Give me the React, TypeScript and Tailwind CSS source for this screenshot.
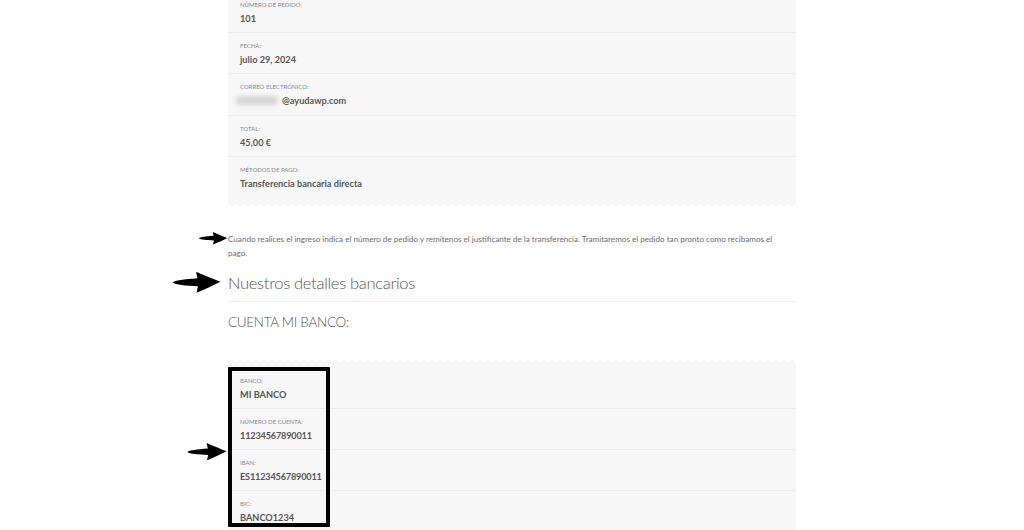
import React from "react";

function Arrow({ className }: { className?: string }) {
  return (
    <svg viewBox="0 0 50 24" className={className} fill="#000">
      <path d="M0.5 12.5 C3 10.5 12 9.5 26 8.3 L24.5 1.5 C33 5 42 9 49.5 11.8 C42 15.5 33 20 25 23 L26.5 16.3 C13 15.6 4 15 0.5 12.5 Z" />
    </svg>
  );
}

function Zigzag({ flip }: { flip?: boolean }) {
  return (
    <svg className="block w-full h-[5px]" preserveAspectRatio="none">
      <defs>
        <pattern id={flip ? "zz-top" : "zz-bot"} width="8" height="5" patternUnits="userSpaceOnUse">
          {flip ? (
            <path d="M0 5 Q2 5 4 1 Q6 5 8 5 Z" fill="#f7f7f7" />
          ) : (
            <path d="M0 0 L8 0 Q6 0 4 4 Q2 0 0 0 Z" fill="#f7f7f7" />
          )}
        </pattern>
      </defs>
      <rect width="100%" height="5" fill={`url(#${flip ? "zz-top" : "zz-bot"})`} />
    </svg>
  );
}

function Row({
  label,
  children,
  first,
  last,
  firstPad = "pt-[8px]",
  lastPad = "pb-[7px]",
  valueClass = "",
}: {
  label: string;
  children: React.ReactNode;
  first?: boolean;
  last?: boolean;
  firstPad?: string;
  lastPad?: string;
  valueClass?: string;
}) {
  return (
    <div
      className={`px-3 ${first ? firstPad : "pt-[8px]"} ${last ? lastPad : "pb-[7px] border-b border-[#ececec]"}`}
    >
      <div className="text-[6px] leading-[10px] uppercase text-[#8a8a8a]">{label}</div>
      <div className={`mt-[2px] text-[9.2px] leading-[13px] font-bold text-[#575757] ${valueClass}`}>{children}</div>
    </div>
  );
}

export default function App() {
  return (
    <div
      className="w-[1024px] h-[530px] overflow-hidden bg-white"
      style={{ fontFamily: "Lato, 'Noto Sans', sans-serif" }}
    >
      <div className="relative mx-auto w-[568px]">
        {/* Order summary panel */}
        <div>
          <div className="bg-[#f7f7f7]">
            <Row label="Número de pedido:" first firstPad="pt-0">
              101
            </Row>
            <Row label="Fecha:">julio 29, 2024</Row>
            <Row label="Correo electrónico:">
              <span className="inline-flex items-center">
                <span className="inline-block w-[42px] h-[9px] mr-[4px] -ml-[4px] bg-[#d6d6d6] blur-[2px] rounded" />
                @ayudawp.com
              </span>
            </Row>
            <Row label="Total:">45,00 €</Row>
            <Row label="Métodos de pago:" last lastPad="pb-[14px]">
              Transferencia bancaria directa
            </Row>
          </div>
          <Zigzag />
        </div>

        {/* Instructions */}
        <p className="mt-[23px] max-w-[558px] text-[8.1px] leading-[14px] text-[#6d6d6d]">
          Cuando realices el ingreso indica el número de pedido y remítenos el justificante de la transferencia.
          Tramitaremos el pedido tan pronto como recibamos el pago.
        </p>

        <h2 className="mt-[11px] pb-[6px] border-b border-[#eeeeee] text-[16.5px] leading-[24px] font-light tracking-[-0.3px] text-[#555]">
          Nuestros detalles bancarios
        </h2>

        <h3 className="mt-[10px] text-[13.5px] leading-[20px] font-light tracking-[-0.3px] text-[#555]">
          CUENTA MI BANCO:
        </h3>

        {/* Bank details panel */}
        <div className="relative mt-[25px]">
          <Zigzag flip />
          <div className="bg-[#f7f7f7] pb-[20px]">
            <Row label="Banco:" first firstPad="pt-[14px]">
              MI BANCO
            </Row>
            <Row label="Número de cuenta:" valueClass="tracking-[-0.2px]">
              11234567890011
            </Row>
            <Row label="IBAN:" valueClass="tracking-[-0.2px]">
              ES11234567890011
            </Row>
            <Row label="BIC:" last>
              BANCO1234
            </Row>
          </div>
          <div className="absolute left-0 top-[10px] w-[102px] h-[160px] border-[4px] border-black rounded-[1px]" />
          <Arrow className="absolute left-[-41px] top-[84px] w-[40px] h-[21px]" />
        </div>

        {/* Annotation arrows */}
        <Arrow className="absolute left-[-30px] top-[231px] w-[30px] h-[14px]" />
        <Arrow className="absolute left-[-56px] top-[270px] w-[49px] h-[24px]" />
      </div>
    </div>
  );
}
